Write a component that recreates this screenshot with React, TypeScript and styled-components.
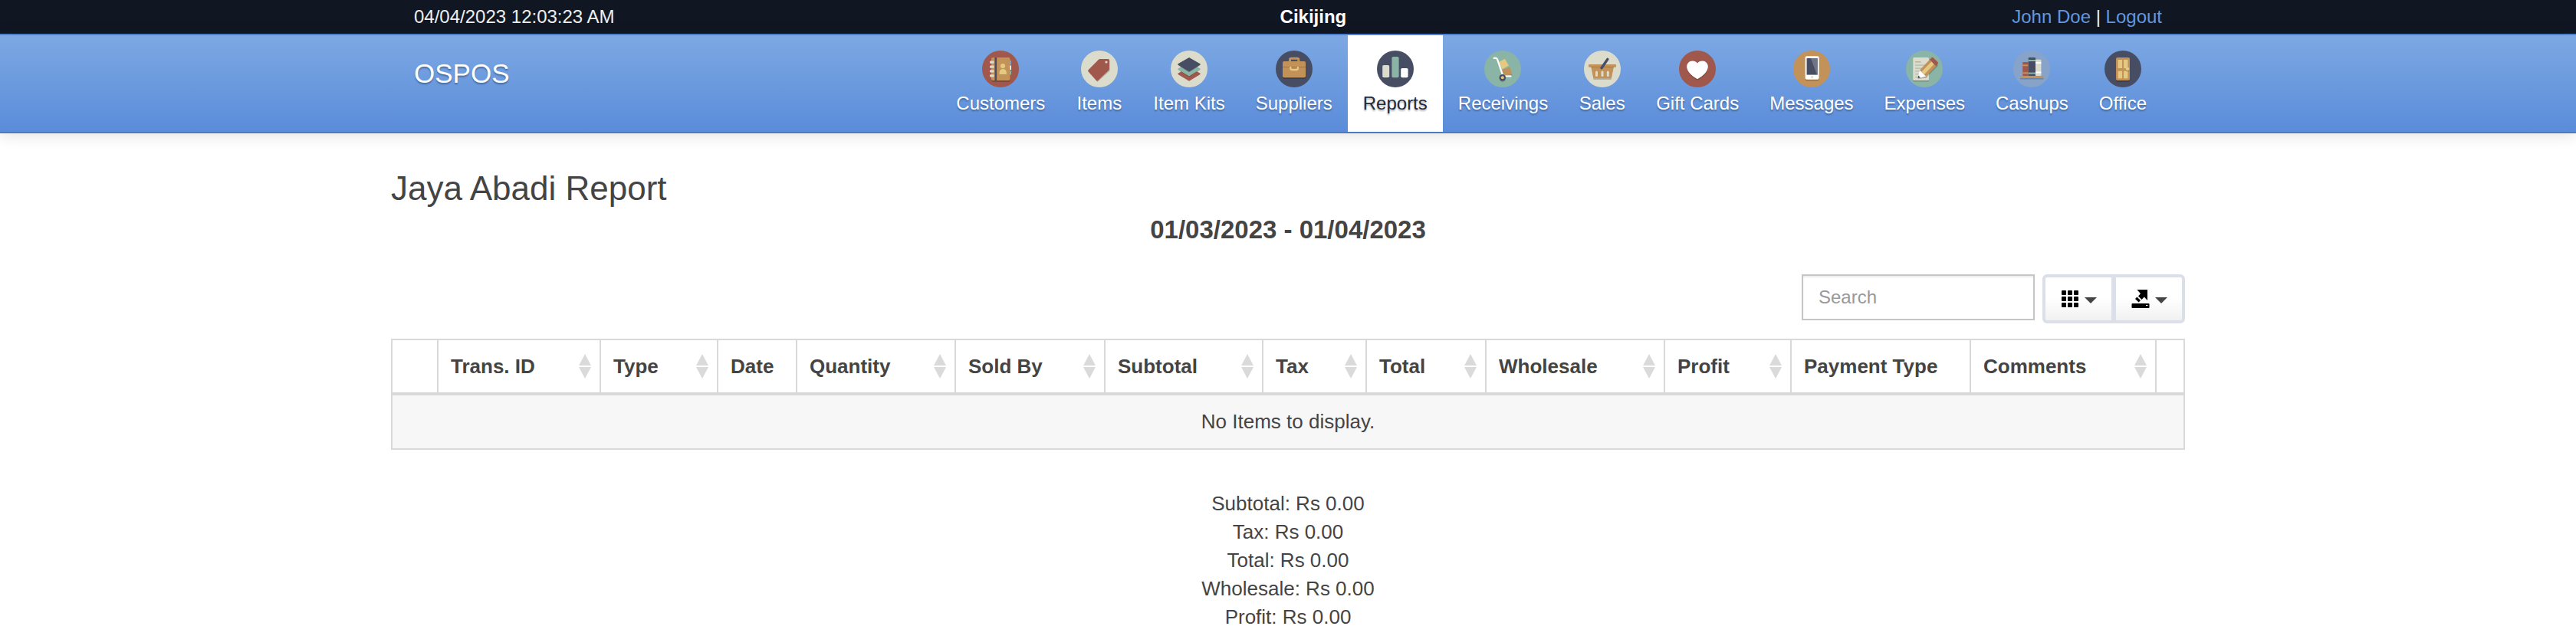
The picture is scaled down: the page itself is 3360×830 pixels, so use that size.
import React from "react";
import styled, { createGlobalStyle } from "styled-components";

const GlobalStyle = createGlobalStyle`
  *, *::before, *::after { box-sizing: border-box; }
  body {
    margin: 0;
    background: #fff;
    color: #444;
    font-family: "Liberation Sans", Arial, sans-serif;
    font-size: 26px;
    line-height: 37px;
  }
`;

const Container = styled.div`
  width: 100%;
  max-width: 2340px;
  margin: 0 auto;
`;

const TopBar = styled.div`
  background: #101722;
  color: #eee;
  font-size: 24px;
  line-height: 34px;
  padding: 5px 0;
`;

const TopBarInner = styled(Container)`
  display: flex;
  padding: 0 30px;
`;

const Company = styled.strong`
  flex: 1;
  text-align: center;
  color: #fff;
`;

const TopLink = styled.a`
  color: #6496df;
  text-decoration: none;
`;

const NavBar = styled.header`
  border-top: 2px solid #4d80d2;
  border-bottom: 2px solid #4c7ac4;
  background: linear-gradient(#7da8e3, #6b9ade 50%, #5b8cda);
  box-shadow: 0 2px 20px rgba(0, 0, 0, 0.12);
`;

const NavInner = styled(Container)`
  display: flex;
  justify-content: space-between;
  padding: 0 30px;
`;

const Brand = styled.a`
  padding-top: 30px;
  color: #fff;
  font-size: 35px;
  line-height: 40px;
  text-decoration: none;
  text-shadow: 0 2px 2px rgba(0, 0, 0, 0.3);
`;

const NavList = styled.nav`
  display: flex;
`;

const NavLink = styled.a<{ $active?: boolean }>`
  display: flex;
  flex-direction: column;
  align-items: center;
  gap: 4px;
  min-width: 101px;
  padding: 20px;
  font-size: 24px;
  line-height: 34px;
  text-decoration: none;
  white-space: nowrap;
  color: ${(p) => (p.$active ? "#222b3c" : "#fff")};
  background: ${(p) => (p.$active ? "#fff" : "transparent")};
  text-shadow: 0 2px 2px rgba(0, 0, 0, 0.3);
`;

const RoundIcon = styled.svg`
  display: block;
  width: 48px;
  height: 48px;
`;

const PageTitle = styled.h1`
  margin: 47px 0 0;
  font-size: 44px;
  line-height: 50px;
  font-weight: 400;
`;

const DateRange = styled.h2`
  margin: 6px 0 0;
  font-size: 33px;
  line-height: 46px;
  text-align: center;
`;

const Toolbar = styled.div`
  display: flex;
  justify-content: flex-end;
  align-items: flex-start;
  gap: 10px;
  margin: 35px 0 20px;
`;

const SearchBox = styled.input`
  width: 304px;
  height: 60px;
  padding: 0 20px;
  border: 2px solid #c6c6c6;
  border-radius: 0;
  box-shadow: inset 0 2px 2px rgba(0, 0, 0, 0.08);
  font: inherit;
  font-size: 24px;
  color: #444;
  &::placeholder {
    color: #999;
    opacity: 1;
  }
`;

const ButtonGroup = styled.div`
  display: flex;
`;

const ToolButton = styled.button`
  display: flex;
  align-items: center;
  justify-content: center;
  gap: 7px;
  width: 94px;
  height: 64px;
  padding: 0;
  border: 4px solid #dbdfe9;
  background: linear-gradient(#fff 50%, #f1f1f1);
  color: #000;
  &:first-child {
    border-radius: 6px 0 0 6px;
  }
  &:last-child {
    margin-left: -2px;
    border-radius: 0 6px 6px 0;
  }
`;

const ToolIcon = styled.svg`
  width: 24px;
  height: 24px;
`;

const Caret = styled.span`
  margin-top: 4px;
  border: 8px solid transparent;
  border-top-color: #444;
  border-bottom: 0;
`;

const ReportTable = styled.table`
  width: 100%;
  table-layout: fixed;
  border-collapse: separate;
  border-spacing: 0;
  border: 2px solid #d9d9d9;
`;

const HeadCell = styled.th`
  height: 72px;
  padding: 0 10px 0 16px;
  border-right: 2px solid #d9d9d9;
  border-bottom: 4px solid #d9d9d9;
  text-align: left;
  white-space: nowrap;
  &:last-child {
    border-right: 0;
  }
`;

const HeadContent = styled.div`
  display: flex;
  align-items: center;
  justify-content: space-between;
`;

const SortIcon = styled.svg`
  flex: none;
  width: 18px;
  height: 32px;
`;

const EmptyCell = styled.td`
  height: 69px;
  padding: 0;
  background: #f7f7f7;
  text-align: center;
`;

const Summary = styled.section`
  margin-top: 52px;
  text-align: center;
`;

const cream = "#dcdccd";
const navy = "#474d63";
const rust = "#a0574c";
const ochre = "#c39259";
const sand = "#e3c981";
const sage = "#8ab4a5";
const shade = "rgba(0,0,0,0.2)";

type Module = { name: string; circle: string; art: React.ReactNode };

const modules: Module[] = [
  {
    name: "Customers",
    circle: rust,
    art: (
      <>
        <rect x="12.5" y="11" width="24" height="30" rx="2" fill={shade} />
        <rect x="34" y="13" width="4" height="5.5" fill="#76a0d8" />
        <rect x="34" y="19.5" width="4" height="5.5" fill="#fff" />
        <rect x="34" y="26" width="4" height="5.5" fill={sage} />
        <rect x="12" y="9" width="24.5" height="30" rx="2" fill={ochre} />
        <rect x="16.5" y="9" width="2.6" height="30" fill={navy} />
        {[13.5, 19.5, 25.3, 31.3].map((y) => (
          <rect key={y} x="10" y={y} width="5.6" height="3.3" rx="1" fill={cream} />
        ))}
        <circle cx="27" cy="20" r="3.1" fill={sand} />
        <path d="M22.6 31v-2.4a4.6 4.6 0 0 1 9.2 0V31z" fill={sand} />
      </>
    ),
  },
  {
    name: "Items",
    circle: cream,
    art: (
      <>
        <path d="M10 27.5 21.4 41 37.5 26.5V13z" fill={shade} />
        <path
          d="M24.6 11H35.5q1.4 0 1.4 1.4V24q0 .8-.6 1.4L22.2 39q-1.1 1.1-2.2 0L9.6 27.5q-1-1.1 0-2.2L23.2 11.6q.6-.6 1.4-.6z"
          fill={rust}
        />
        <circle cx="33" cy="15" r="1.6" fill={cream} />
      </>
    ),
  },
  {
    name: "Item Kits",
    circle: cream,
    art: (
      <>
        <g strokeLinejoin="round" strokeWidth="1.5">
          <path d="M10 31.5 24 40.2l14-8.7-4-2.5H14z" fill={shade} />
          <path d="M10 30.3 24 38.7l14-8.4L24 22z" fill={rust} stroke={rust} />
          <path d="M10 25.5 24 34.4l14-8.9L24 17z" fill={shade} />
          <path d="M10 24.2 24 32.7l14-8.5L24 16z" fill={sage} stroke={sage} />
          <path d="M10 19.5 24 28.4l14-8.9L24 11z" fill={shade} />
          <path d="M10 18 24 26.5 38 18 24 9.8z" fill={navy} stroke={navy} />
        </g>
      </>
    ),
  },
  {
    name: "Suppliers",
    circle: navy,
    art: (
      <>
        <rect x="9" y="16" width="30" height="21" rx="2" fill={shade} />
        <path d="M18.5 15v-3q0-1.8 1.8-1.8H28q1.8 0 1.8 1.8v3" fill="none" stroke={ochre} strokeWidth="3" />
        <rect x="9" y="14" width="30" height="21.3" rx="2" fill={ochre} />
        <rect x="9" y="21" width="30" height="1" fill="#9d7546" />
        <path d="M19.3 21v2q0 2.2 2.2 2.2h5.2q2.2 0 2.2-2.2v-2" fill="none" stroke={sand} strokeWidth="2.2" />
      </>
    ),
  },
  {
    name: "Reports",
    circle: navy,
    art: (
      <>
        <rect x="7.2" y="20" width="9" height="16.3" rx="1.5" fill={shade} />
        <rect x="7.2" y="19" width="9" height="16.3" rx="1.8" fill={cream} />
        <rect x="19.4" y="8" width="9.2" height="27.3" rx="1.8" fill={sage} />
        <rect x="31.2" y="23" width="9.4" height="12.3" rx="1.8" fill="#fff" />
      </>
    ),
  },
  {
    name: "Receivings",
    circle: sage,
    art: (
      <>
        <path d="M24 27 33.6 23.5 36.4 33 27 36z" fill={shade} />
        <path d="M19 15 26.8 10.8 32 19.6 23.2 24.6z" fill={sand} />
        <path d="M23.2 25 33.4 21.5 36 30.8 26.5 33.8z" fill={ochre} />
        <path d="M12.6 9.9 14.5 9.6Q16.4 9.7 17 11.4L24.6 33.6 34.6 33.4" fill="none" stroke="#fff" strokeWidth="2.2" strokeLinecap="round" strokeLinejoin="round" />
        <circle cx="23.8" cy="36.8" r="4.1" fill={shade} />
        <circle cx="23.8" cy="35.2" r="4.2" fill={navy} />
        <circle cx="23.8" cy="35.2" r="2" fill={sand} />
      </>
    ),
  },
  {
    name: "Sales",
    circle: cream,
    art: (
      <>
        <path d="M10 22h28.5L35.5 38h-23z" fill={shade} />
        <path d="M9 20h30.2L36 35q-.3 1.3-1.6 1.3H13.8q-1.3 0-1.6-1.3z" fill={ochre} />
        <rect x="6" y="21" width="36" height="1" fill={shade} />
        <rect x="6" y="18" width="36" height="3.2" rx="1" fill={ochre} />
        {[15, 22.5, 29.8].map((x) => (
          <rect key={x} x={x} y="26.5" width="3" height="7.5" rx="1.5" fill={cream} />
        ))}
        <path d="M23 22.8 30.8 11.4" stroke={navy} strokeWidth="3.4" strokeLinecap="round" />
      </>
    ),
  },
  {
    name: "Gift Cards",
    circle: rust,
    art: (
      <>
        <path d="M24 38.6C16 34 10.2 28.6 10.2 22.4h27.6C37.8 28.6 32 34 24 38.6z" fill={shade} />
        <path
          d="M24 37.2C16 32.6 10.2 27 10.2 20.9c0-4.3 3.2-7.5 7.2-7.5 2.8 0 5.3 1.2 6.6 3.2 1.3-2 3.8-3.2 6.6-3.2 4 0 7.2 3.2 7.2 7.5 0 6.1-5.8 11.7-13.8 16.3z"
          fill="#fff"
        />
      </>
    ),
  },
  {
    name: "Messages",
    circle: ochre,
    art: (
      <>
        <rect x="15.6" y="9" width="18" height="30.4" rx="2" fill={shade} />
        <rect x="15.6" y="7.3" width="18" height="30.4" rx="2" fill="#fff" />
        <rect x="17.6" y="10" width="14" height="21.6" fill={navy} />
        <path d="M23 10h8.6v21.6h-.8z" fill="#6f7486" />
        <circle cx="24.6" cy="34.5" r="1.5" fill={cream} />
      </>
    ),
  },
  {
    name: "Expenses",
    circle: sage,
    art: (
      <>
        <rect x="9.2" y="10.5" width="20.8" height="30" rx="1.5" fill={shade} />
        <rect x="9.2" y="9" width="20.8" height="30" rx="1.5" fill={cream} />
        <g fill="#b5b5a8">
          <rect x="12" y="14" width="7.5" height="1.6" />
          <rect x="12" y="18.5" width="14" height="1.2" />
          <rect x="12" y="22.5" width="12" height="1.2" />
          <rect x="12" y="26.3" width="9" height="1.2" />
          <rect x="12" y="30.2" width="6" height="1.2" />
          <rect x="12" y="34" width="15" height="1.2" />
        </g>
        <path d="M15.5 37.2 26.5 35.6 42 19.5 37 14z" fill={shade} />
        <path d="M15.4 36.2 18 25.4 26.6 33.8z" fill="#fff" />
        <path d="M15.4 36.2l.9-3.6 2.7 2.6z" fill={navy} />
        <path d="M18 25.4 31 11.8 39.2 20.2 26.2 33.8z" fill={ochre} />
        <path d="M20.4 27.8 33.4 14.2 36.8 17.7 23.8 31.3z" fill={sand} />
        <path d="M31 11.8 33.4 9.3q1.2-1 2.4.1l5.7 5.6q1 1.2 0 2.4L39.2 20.2z" fill={rust} />
      </>
    ),
  },
  {
    name: "Cashups",
    circle: "#87a3ca",
    art: (
      <>
        <rect x="9.2" y="35" width="30.2" height="2.5" fill={shade} />
        <rect x="12.2" y="15" width="7.5" height="18" rx="1" fill={rust} />
        <rect x="12.2" y="18.3" width="7.5" height="2" fill={ochre} />
        <rect x="12.2" y="28.3" width="7.5" height="2" fill={ochre} />
        <rect x="19.7" y="9" width="9.3" height="24" rx="1" fill={navy} />
        <rect x="19.7" y="12" width="9.3" height="2" fill={sage} />
        <rect x="19.7" y="28.6" width="9.3" height="2" fill={sage} />
        <rect x="29" y="11.8" width="7.4" height="21.2" rx="1" fill={cream} />
        <rect x="29" y="15" width="7.4" height="2" fill="#fff" />
        <rect x="29" y="27.5" width="7.4" height="2" fill="#fff" />
        <rect x="9.2" y="33" width="30.2" height="3" fill={ochre} />
      </>
    ),
  },
  {
    name: "Office",
    circle: navy,
    art: (
      <>
        <rect x="15" y="11" width="18" height="30" rx="2" fill={shade} />
        <rect x="15" y="9" width="18" height="30" rx="2" fill={ochre} />
        <g fill={sand}>
          <rect x="17.6" y="12" width="5.4" height="11" />
          <rect x="25" y="12" width="5.4" height="11" />
          <rect x="17.6" y="26.7" width="5.4" height="9.6" />
          <rect x="25" y="26.7" width="5.4" height="9.6" />
        </g>
        <circle cx="30" cy="25.2" r="2.3" fill={shade} />
        <circle cx="30" cy="24" r="2.3" fill={sand} />
      </>
    ),
  },
];

type Column = { title: string; width: number; sortable?: boolean };

const columns: Column[] = [
  { title: "", width: 60 },
  { title: "Trans. ID", width: 212, sortable: true },
  { title: "Type", width: 153, sortable: true },
  { title: "Date", width: 103 },
  { title: "Quantity", width: 207, sortable: true },
  { title: "Sold By", width: 195, sortable: true },
  { title: "Subtotal", width: 206, sortable: true },
  { title: "Tax", width: 135, sortable: true },
  { title: "Total", width: 156, sortable: true },
  { title: "Wholesale", width: 233, sortable: true },
  { title: "Profit", width: 165, sortable: true },
  { title: "Payment Type", width: 234 },
  { title: "Comments", width: 242, sortable: true },
  { title: "", width: 35 },
];

const Col = styled.col<{ $width: number }>`
  width: ${(p) => p.$width}px;
`;

const totals = [
  "Subtotal: Rs 0.00",
  "Tax: Rs 0.00",
  "Total: Rs 0.00",
  "Wholesale: Rs 0.00",
  "Profit: Rs 0.00",
];

export default function App() {
  return (
    <>
      <GlobalStyle />
      <TopBar>
        <TopBarInner>
          <span>04/04/2023 12:03:23 AM</span>
          <Company>Cikijing</Company>
          <span>
            <TopLink href="#profile">John Doe</TopLink> | <TopLink href="#logout">Logout</TopLink>
          </span>
        </TopBarInner>
      </TopBar>
      <NavBar>
        <NavInner>
          <Brand href="#home">OSPOS</Brand>
          <NavList>
            {modules.map((m) => (
              <NavLink key={m.name} href={"#" + m.name} $active={m.name === "Reports"}>
                <RoundIcon viewBox="0 0 48 48" aria-hidden="true">
                  <circle cx="24" cy="24" r="24" fill={m.circle} />
                  {m.art}
                </RoundIcon>
                {m.name}
              </NavLink>
            ))}
          </NavList>
        </NavInner>
      </NavBar>
      <Container as="main">
        <PageTitle>Jaya Abadi Report</PageTitle>
        <DateRange>01/03/2023 - 01/04/2023</DateRange>
        <Toolbar>
          <SearchBox type="text" placeholder="Search" aria-label="Search" />
          <ButtonGroup>
            <ToolButton type="button" aria-label="Columns">
              <ToolIcon viewBox="0 0 24 24" aria-hidden="true">
                {[1, 9, 17].map((y) =>
                  [1, 9, 17].map((x) => (
                    <rect key={x + "-" + y} x={x} y={y} width="6" height="6" rx="1" />
                  )),
                )}
              </ToolIcon>
              <Caret />
            </ToolButton>
            <ToolButton type="button" aria-label="Export data">
              <ToolIcon viewBox="0 0 24 24" aria-hidden="true">
                <path d="M7.5 0H21v14l-4.2-4.4-3.2 3.4-4.6-4.4 3-3.4z" />
                <path d="M7.4 9.6 12 14l-2.4 2.4L5 12z" />
                <path
                  fillRule="evenodd"
                  d="M1.5 18h21q1 0 1 1v4q0 1-1 1h-21q-1 0-1-1v-4q0-1 1-1zM19 20h2.5v1H19z"
                />
              </ToolIcon>
              <Caret />
            </ToolButton>
          </ButtonGroup>
        </Toolbar>
        <ReportTable>
          <colgroup>
            {columns.map((c, i) => (
              <Col key={i} $width={c.width} />
            ))}
          </colgroup>
          <thead>
            <tr>
              {columns.map((c, i) => (
                <HeadCell key={i} scope="col">
                  <HeadContent>
                    {c.title}
                    {c.sortable && (
                      <SortIcon viewBox="0 0 18 32" fill="#dadada" aria-hidden="true">
                        <path d="M9 0 17 15H1zM1 17h16L9 32z" />
                      </SortIcon>
                    )}
                  </HeadContent>
                </HeadCell>
              ))}
            </tr>
          </thead>
          <tbody>
            <tr>
              <EmptyCell colSpan={columns.length}>No Items to display.</EmptyCell>
            </tr>
          </tbody>
        </ReportTable>
        <Summary>
          {totals.map((line) => (
            <div key={line}>{line}</div>
          ))}
        </Summary>
      </Container>
    </>
  );
}
